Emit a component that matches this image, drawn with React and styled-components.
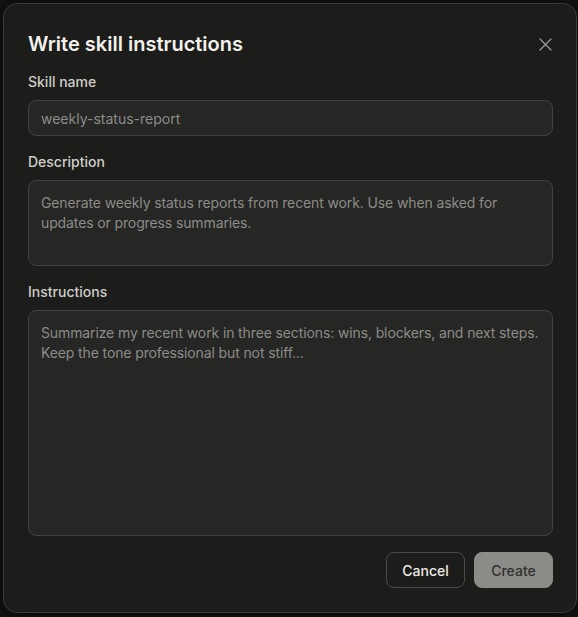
import styled, { createGlobalStyle } from 'styled-components';

const GlobalStyle = createGlobalStyle`
  html, body {
    margin: 0;
    padding: 0;
    background: #121212;
    font-family: Inter, "Noto Sans", sans-serif;
  }
  * { box-sizing: border-box; }
`

const Page = styled.div`
  width: 578px;
  height: 617px;
  padding: 3px 1px 0 3px;
`

const Dialog = styled.div`
  width: 574px;
  height: 610px;
  background: #1c1c1b;
  border: 1px solid #3a3a38;
  border-radius: 14px;
  padding: 24px 23px 24px 24px;
  display: flex;
  flex-direction: column;
  box-shadow: 0 4px 24px rgba(0, 0, 0, 0.5);
`

const Header = styled.div`
  display: flex;
  align-items: center;
  justify-content: space-between;
  height: 32px;
  margin-bottom: 12px;
`

const Title = styled.h2`
  margin: 0;
  font-size: 20px;
  font-weight: 600;
  color: #f2f1ec;
`

const CloseButton = styled.button`
  background: none;
  border: none;
  padding: 0;
  width: 24px;
  height: 24px;
  display: flex;
  align-items: center;
  justify-content: center;
  color: #9d9d98;
  margin-right: -4px;
  cursor: pointer;
`

const Field = styled.div`
  display: flex;
  flex-direction: column;
  gap: 8px;
  margin-bottom: 16px;
`

const Label = styled.label`
  font-size: 14px;
  line-height: 20px;
  font-weight: 500;
  color: #cfcec8;
`

const Input = styled.div`
  height: 36px;
  background: #262625;
  border: 1px solid #41413f;
  border-radius: 8px;
  padding: 0 12px;
  display: flex;
  align-items: center;
  font-size: 14px;
  color: #8d8c87;
`

const TextArea = styled.div`
  height: ${p => p.$h}px;
  background: #262625;
  border: 1px solid #41413f;
  border-radius: 8px;
  padding: 12px 8px 12px 12px;
  font-size: 14px;
  line-height: 20px;
  letter-spacing: -0.12px;
  color: #8d8c87;
`

const Footer = styled.div`
  display: flex;
  justify-content: flex-end;
  gap: 9px;
  margin-top: auto;
`

const Button = styled.button`
  height: 36px;
  width: 79px;
  border-radius: 8px;
  font-family: inherit;
  font-size: 14px;
  font-weight: 500;
  border: 1px solid ${p => (p.$primary ? '#8b8b87' : '#4a4a47')};
  background: ${p => (p.$primary ? '#8b8b87' : '#1c1c1b')};
  color: ${p => (p.$primary ? '#31312f' : '#ecebe6')};
`

function CloseIcon() {
  return (
    <svg width="13" height="13" viewBox="0 0 13 13" fill="none">
      <path d="M1 1 L12 12 M12 1 L1 12" stroke="currentColor" strokeWidth="1.2" strokeLinecap="round" />
    </svg>
  )
}

export default function App() {
  return (
    <Page>
      <GlobalStyle />
      <Dialog>
        <Header>
          <Title>Write skill instructions</Title>
          <CloseButton aria-label="Close"><CloseIcon /></CloseButton>
        </Header>
        <Field>
          <Label>Skill name</Label>
          <Input>weekly-status-report</Input>
        </Field>
        <Field>
          <Label>Description</Label>
          <TextArea $h={86}>
            Generate weekly status reports from recent work. Use when asked for updates or progress summaries.
          </TextArea>
        </Field>
        <Field>
          <Label>Instructions</Label>
          <TextArea $h={226}>
            Summarize my recent work in three sections: wins, blockers, and next steps. Keep the tone professional but not stiff...
          </TextArea>
        </Field>
        <Footer>
          <Button>Cancel</Button>
          <Button $primary>Create</Button>
        </Footer>
      </Dialog>
    </Page>
  )
}
